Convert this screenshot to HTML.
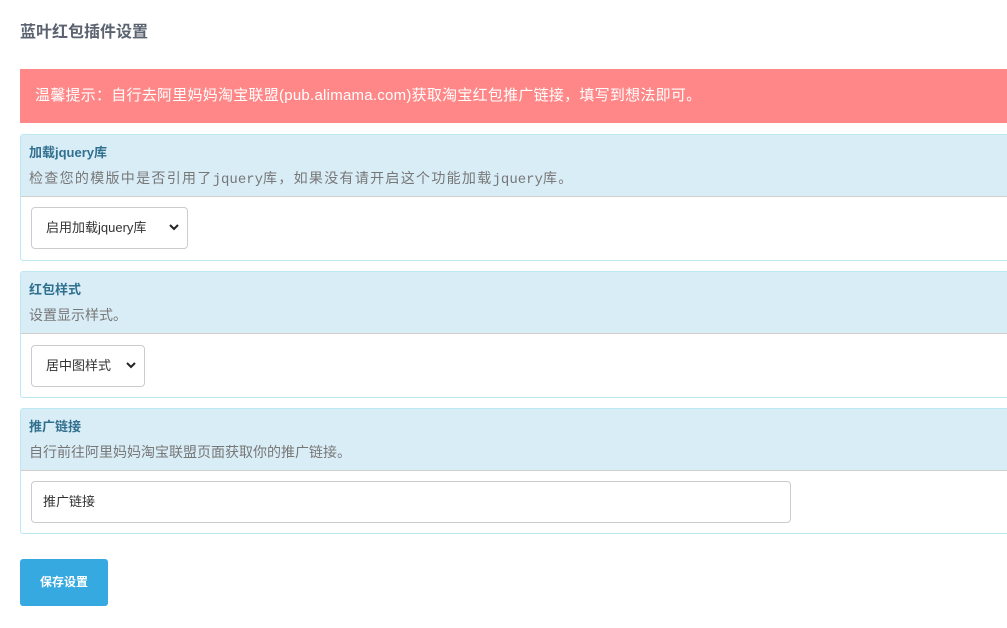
<!DOCTYPE html>
<html><head><meta charset="utf-8"><style>
*{box-sizing:border-box}
body{margin:0;width:1007px;height:628px;overflow:hidden;background:#fff;font-family:"Liberation Sans","Noto Sans CJK SC",sans-serif;}
.t{position:absolute;left:20px;top:18px;font-size:16px;font-weight:bold;color:#5b6270;}
.alert{position:absolute;left:20px;top:69px;width:1000px;height:54px;background:#ff8787;color:#fff;font-size:15px;padding-left:15px;line-height:54px;letter-spacing:0.25px;}
.p{position:absolute;left:20px;width:1000px;border:1px solid #bce8f1;border-radius:3px;background:#fff;}
.h{background:#d9edf7;height:62px;border-bottom:1px solid #d4cfcc;padding:9px 0 0 8px;}
.h b{display:block;font-size:13px;color:#31708f;line-height:18px;}
.h span{display:block;font-size:14px;color:#777;line-height:18px;margin-top:7px;}
.sel{position:absolute;left:10px;height:42px;border:1px solid #ccc;border-radius:4px;font-size:13px;color:#333;line-height:40px;padding-left:14px;}
.sel svg{position:absolute;right:8px;top:16px}
.btn{position:absolute;left:20px;top:559px;width:88px;height:47px;background:#36a9e1;border-radius:3px;color:#fff;font-size:12px;font-weight:bold;text-align:center;line-height:47px;}
</style></head><body>
<div class="t">蓝叶红包插件设置</div>
<div class="alert">温馨提示：自行去阿里妈妈淘宝联盟(pub.alimama.com)获取淘宝红包推广链接，填写到想法即可。</div>
<div class="p" style="top:134px;height:127px"><div class="h"><b>加载jquery库</b><span style="letter-spacing:1.3px">检查您的模版中是否引用了<span style="display:inline;font-family:'Liberation Mono',monospace;color:#777;letter-spacing:0">jquery</span>库，如果没有请开启这个功能加载<span style="display:inline;font-family:'Liberation Mono',monospace;color:#777;letter-spacing:0">jquery</span>库。</span></div>
<div class="sel" style="top:72px;width:157px">启用加载jquery库<svg width="10" height="7" viewBox="0 0 10 7"><path d="M1 1l4 4 4-4" stroke="#222" stroke-width="2" fill="none"/></svg></div></div>
<div class="p" style="top:271px;height:127px"><div class="h"><b>红包样式</b><span>设置显示样式。</span></div>
<div class="sel" style="top:73px;width:114px">居中图样式<svg width="10" height="7" viewBox="0 0 10 7"><path d="M1 1l4 4 4-4" stroke="#222" stroke-width="2" fill="none"/></svg></div></div>
<div class="p" style="top:408px;height:126px"><div class="h"><b>推广链接</b><span>自行前往阿里妈妈淘宝联盟页面获取你的推广链接。</span></div>
<div class="sel" style="top:72px;width:760px;padding-left:11px">推广链接</div></div>
<div class="btn">保存设置</div>
</body></html>
